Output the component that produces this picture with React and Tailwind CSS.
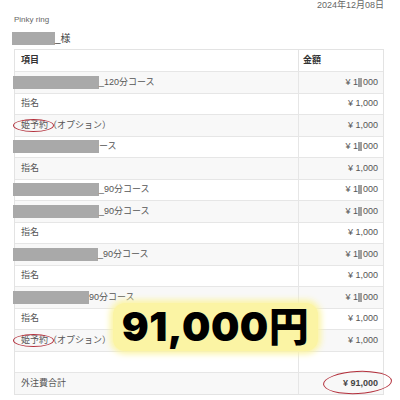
const jp = { fontFamily: '"Liberation Sans", "Noto Sans CJK JP", sans-serif' };

function Block({ w }) {
  return <span className="inline-block h-[13px] bg-[#a9a9a9] -ml-[8px] shrink-0" style={{ width: w }} />;
}

function Amount({ redact }) {
  if (!redact) return <span>¥ 1,000</span>;
  return (
    <span className="flex items-center">
      ¥ 1<span className="inline-block w-[4px] h-[9px] bg-[#a0a0a0] mx-[0.5px]" />000
    </span>
  );
}

function Oval({ className }) {
  return <span className={"absolute rounded-[50%] border-[1.5px] border-[#b3303c] " + className} />;
}

const rows = [
  { block: 86, text: "_120分コース", redact: true },
  { text: "指名" },
  { text: "姫予約（オプション）", oval: true },
  { block: 86, text: "ース", redact: true },
  { text: "指名" },
  { block: 86, text: "_90分コース", redact: true },
  { block: 86, text: "_90分コース", redact: true },
  { text: "指名" },
  { block: 85, text: "_90分コース", redact: true },
  { text: "指名" },
  { block: 76, text: "90分コース", redact: true },
  { text: "指名" },
  { text: "姫予約（オプション）", oval: true },
  { empty: true },
];

export default function App() {
  return (
    <div className="relative w-[400px] h-[400px] overflow-hidden bg-white text-[#555]" style={jp}>
      <div className="flex justify-end pr-[16px] -mt-[1px] h-[12px] text-[9px] leading-[12px] text-[#666]">
        2024年12月08日
      </div>
      <div className="pl-[14px] mt-[4px] text-[8px] leading-[10px] text-[#666]">Pinky ring</div>
      <div className="flex items-center pl-[20px] mt-[6px] h-[14px] text-[10px] text-[#444]">
        <Block w={43} />
        <span>_様</span>
      </div>

      <div className="ml-[14px] mt-[4px] w-[370px] border border-[#e3e3e3] text-[9px]">
        <div className="flex h-[21px] items-center bg-white font-bold text-[#333]">
          <div className="w-[284px] h-full flex items-center pl-[6px] border-r border-[#e3e3e3]">項目</div>
          <div className="flex-1 pl-[4px]">金額</div>
        </div>
        {rows.map((r, i) => (
          <div
            key={i}
            className={
              "flex h-[21.5px] border-t border-[#e6e6e6] " + (i % 2 === 0 ? "bg-[#f8f8f8]" : "bg-white")
            }
          >
            <div className="relative w-[284px] h-full flex items-center pl-[6px] border-r border-[#e6e6e6]">
              {r.block && <Block w={r.block} />}
              {!r.empty && <span>{r.text}</span>}
              {r.oval && <Oval className="left-[-2px] top-[4px] w-[41px] h-[13px]" />}
            </div>
            <div className="flex-1 h-full flex items-center justify-end pr-[5px]">
              {!r.empty && <Amount redact={r.redact} />}
            </div>
          </div>
        ))}
        <div className="flex h-[22px] border-t border-[#e6e6e6] bg-[#f8f8f8]">
          <div className="w-[284px] h-full flex items-center pl-[6px] border-r border-[#e6e6e6]">外注費合計</div>
          <div className="flex-1 h-full flex items-center justify-end pr-[5px] font-bold text-[#444]">¥ 91,000</div>
        </div>
      </div>

      <Oval className="left-[323px] top-[371px] w-[69px] h-[23px] rotate-[-3deg]" />

      <div className="absolute left-[113px] top-[303px] w-[205px] h-[48px] rounded-[12px] bg-[#fbf4a4] shadow-[0_0_6px_3px_#fbf4a4] flex items-center justify-center">
        <span
          className="text-[40px] font-black text-black leading-none tracking-[0.5px]"
          style={{ fontFamily: 'Inter, "Noto Sans CJK JP", sans-serif' }}
        >
          91,000円
        </span>
      </div>
    </div>
  );
}
